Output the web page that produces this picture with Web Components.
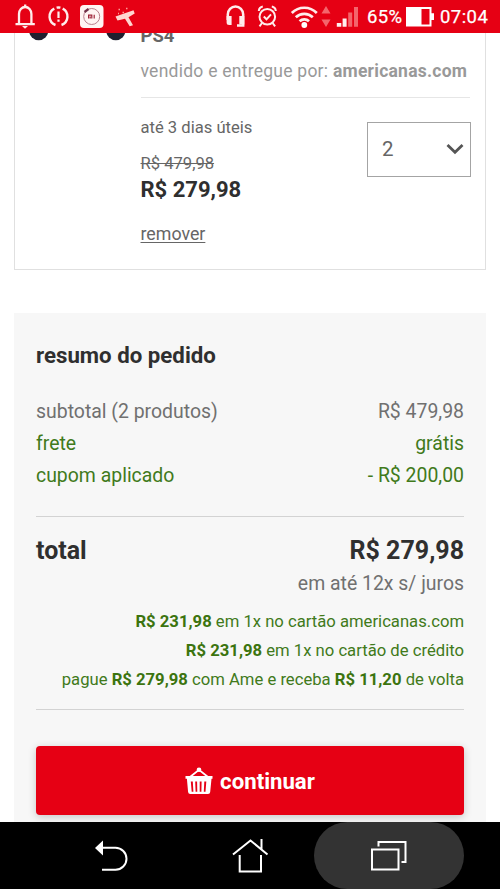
<!DOCTYPE html>
<html lang="pt-BR">
<head>
<meta charset="utf-8">
<title>americanas.com</title>
<style>
html,body{margin:0;height:100%;background:#fff}
body{font-family:Roboto,"Liberation Sans",sans-serif;overflow:hidden}
</style>
</head>
<body>
<cart-screen></cart-screen>
<script>
function define(name, html){
  const t=document.createElement('template');
  t.innerHTML=html;
  customElements.define(name,class extends HTMLElement{
    constructor(){super();this.attachShadow({mode:'open'}).append(t.content.cloneNode(true));}
  });
}

define('status-bar',`<style>
:host{display:flex;align-items:center;height:33px;background:#e60014;color:#fff;box-sizing:border-box;flex:none}
svg{display:block;flex:none}
.gap{flex:1}
span{font-size:18.5px;line-height:33px;white-space:nowrap;position:relative;top:1px;-webkit-text-stroke:.25px #fff}
.p{width:37px;margin-left:7px;letter-spacing:.3px}
.t{width:60px;letter-spacing:.45px}
</style>
<svg width="140" height="33" viewBox="0 0 140 33" fill="none" stroke="#ffeceb" stroke-width="2">
 <path d="M19 23V14a6.200 7 0 0 1 12.400 0V23M15.500 24.200H34.800M25.200 4.500V8" stroke-width="2.300"/><path d="M22 26h6l-3 2.800z" fill="#ffeceb" stroke="none"/>
 <path d="M54.300 8.600A9 9 0 0 0 55.500 25M61.500 25A9 9 0 0 0 62.700 8.600M56.600 7.700A9 9 0 0 1 60.400 7.700" stroke-width="2.400"/>
 <path d="M58.500 11.500V18M58.500 19.500V21.800" stroke-width="2.200"/>
 <rect x="80" y="5" width="23.500" height="23" rx="4" fill="#fff4f3" stroke="none"/>
 <circle cx="91.700" cy="16.500" r="8" stroke="#b9808d" stroke-width="1"/>
 <path d="M84.500 12l4-3" stroke="#713048" stroke-width="2.200"/>
 <path d="M88.600 18.500v-3.300h3.200v3.300M90.200 16.500v2M94.200 14.800v3.700" stroke="#9e2439" stroke-width="1.200"/>
 <path d="M115.500 16.500L133.500 10.300L134.700 13.500L128.500 17.300L133 25.200L129.700 26.200L125 18.700L117.500 20.500Z" fill="#ffd6d0" stroke="none"/>
 <path d="M118.500 9.500h1.500M126 8.500h1.500M122.500 12.500h1.500M118 13.500h1" stroke="#ff9b95" stroke-width="1.500"/>
</svg>
<div class="gap"></div>
<svg width="135" height="33" viewBox="225 0 135 33" fill="none" stroke="#ffeceb" stroke-width="2">
 <path d="M227.800 20V14.500a7.700 8 0 0 1 15.400 0V25.500H237" stroke-width="2.500"/>
 <path d="M226.600 16h5v9h-2.500a2.500 2.500 0 0 1-2.500-2.500zM239.300 16h5v8.500h-5z" fill="#ffeceb" stroke="none"/>
 <circle cx="267.300" cy="16.800" r="7.800"/><path d="M263.800 16.500l2.700 2.800 4.500-5M258.800 11a5 5 0 0 1 4-4.500M271.800 6.500a5 5 0 0 1 4 4.500M262 23l-2.500 3.300M272.600 23l2.500 3.300"/>
 <path d="M291.800 13a17.500 17.500 0 0 1 25 0M295.800 17.300a12.200 12.200 0 0 1 17 0M299.600 21.300a6.800 6.800 0 0 1 9.400 0" stroke-width="2.700"/>
 <circle cx="304.300" cy="25" r="2.900" fill="#fff" stroke="none"/>
 <path d="M321.500 13.500l4.500-7.500 4.500 7.500zM321.500 19.500l4.500 7.500 4.500-7.500z" fill="#f4656c" stroke="none"/>
 <path d="M336.800 23h4.500v3.800h-4.500zM342.600 18.500h4v8.300h-4z" fill="#fff0ef" stroke="none"/>
 <path d="M348.200 12.500h4v14.300h-4zM354 7h4v19.800h-4z" fill="#f4656c" stroke="none"/>
</svg>
<span class="p">65%</span>
<svg width="36" height="33" viewBox="404 0 36 33"><path fill="#fff" fill-rule="evenodd" d="M406 7h25.500v6.300h2.500v6.700h-2.500v6.500H406zM421.500 9v15.500h8V9z"/></svg>
<span class="t">07:04</span>`);

define('seller-line',`<style>
:host{display:block;height:24px;line-height:24px;font-size:17.500px;letter-spacing:.25px;color:#999;white-space:nowrap}
::slotted(b){font-weight:700}
</style><slot></slot>`);

define('qty-select',`<style>
:host{display:flex;box-sizing:border-box;width:104px;height:55px;margin-right:-1px;border:1px solid #a4a4a4;align-items:center;justify-content:space-between;padding:0 6px 1px 14px;color:#666;font-size:20.500px}
svg{display:block}
</style><slot></slot>
<svg width="18" height="12" viewBox="0 0 18 12" fill="none" stroke="#555" stroke-width="2.800"><path d="M1.500 2L9 9.300L16.500 2"/></svg>`);

define('product-card',`<style>
:host{display:block;box-sizing:border-box;height:237px;margin:0 14px;border:1px solid #e0e0e0;border-top:0;overflow:hidden}
.body{display:grid;grid-template-columns:125.500px 1fr;padding-right:15px}
.pic svg{display:block}
.name{height:24px;line-height:24px;margin-top:-9px;font-size:18.500px;font-weight:700;color:#666}
seller-line{margin-top:11px}
.rule{height:1px;background:#e6e6e6;margin-top:14px}
.row{display:flex;justify-content:space-between;align-items:flex-start}
.row>div{padding-top:18px}
qty-select{margin-top:24px}
.l{height:24px;line-height:24px;font-size:16.600px;color:#666;white-space:nowrap}
.old{margin-top:12px;text-decoration:line-through}
.now{margin-top:2px;font-size:22px;font-weight:700;color:#2f2f2f}
.rm{margin-top:20px;font-size:17.800px;text-decoration:underline;text-underline-offset:2px;text-decoration-thickness:1px}
</style>
<div class="body">
 <div class="pic"><svg width="126" height="12" viewBox="15 33 126 12"><ellipse cx="38.700" cy="31" rx="9.500" ry="9.300" fill="#20202f"/><ellipse cx="115.800" cy="31" rx="9.500" ry="9.300" fill="#20202f"/></svg></div>
 <div>
  <div class="name">PS4</div>
  <seller-line>vendido e entregue por: <b>americanas.com</b></seller-line>
  <div class="rule"></div>
  <div class="row">
   <div>
    <div class="l">até 3 dias úteis</div>
    <div class="l old">R$ 479,98</div>
    <div class="l now">R$ 279,98</div>
    <div class="l rm">remover</div>
   </div>
   <qty-select>2</qty-select>
  </div>
 </div>
</div>`);

define('summary-row',`<style>
:host{display:flex;justify-content:space-between;height:32px;line-height:32px;font-size:19.430px;color:var(--c,#707070);white-space:nowrap}
</style><slot name="label"></slot><slot name="value"></slot>`);

define('pay-option',`<style>
:host{display:block;height:29px;line-height:29px;font-size:16.670px;color:#417a1b;text-align:right;white-space:nowrap}
::slotted(b){font-weight:700;color:#3c740f}
</style><slot></slot>`);

define('buy-button',`<style>
:host{display:flex;align-items:center;justify-content:center;gap:7px;height:69px;border-radius:4px;background:#e60014;color:#fff;font-size:22.200px;font-weight:700;box-shadow:0 2px 8px rgba(0,0,0,.2)}
svg{display:block}
</style>
<svg width="28" height="28" viewBox="185 766 28 28"><path d="M190 776L199 768.800L208 776" fill="none" stroke="#fff" stroke-width="1.800"/><circle cx="199" cy="768.800" r="2.300" fill="#fff"/>
<path fill="#fff" fill-rule="evenodd" d="M185.500 775h27v2.800h-1l-1.300 13.300q-.2 2-2.200 2H190.300q-2 0-2.200-2L186.900 777.800H185.500zM190.800 780.500l.9 10.300h1.700l-.6-10.300zM195.200 780.500l.4 10.300h1.700l-.2-10.300zM199.700 780.500v10.300h1.700l.2-10.300zM204.300 780.500l-.5 10.300h1.700l.8-10.300z"/></svg>
<slot></slot>`);

define('order-summary',`<style>
:host{display:block;box-sizing:border-box;height:520px;margin:43px 14px 0;padding:26px 22px 0;background:#f7f7f7}
h2{margin:0 0 25px;height:32px;line-height:32px;font-size:22.250px;font-weight:700;color:#2f2f2f;white-space:nowrap}
.g{--c:#417a1b}
.rule{height:1px;background:#d3d3d3}
.a{margin-top:24px}
.total{display:flex;justify-content:space-between;height:34px;line-height:34px;margin-top:17px;font-size:25px;font-weight:700;color:#2f2f2f;white-space:nowrap}
.inst{height:32px;line-height:32px;text-align:right;font-size:19.430px;color:#707070;margin-bottom:7px}
.b{margin:15px 0 36px}
</style>
<h2>resumo do pedido</h2>
<summary-row><span slot="label">subtotal (2 produtos)</span><span slot="value">R$ 479,98</span></summary-row>
<summary-row class="g"><span slot="label">frete</span><span slot="value">grátis</span></summary-row>
<summary-row class="g"><span slot="label">cupom aplicado</span><span slot="value">- R$ 200,00</span></summary-row>
<div class="rule a"></div>
<div class="total"><span>total</span><span>R$ 279,98</span></div>
<div class="inst">em até 12x s/ juros</div>
<pay-option><b>R$ 231,98</b> em 1x no cartão americanas.com</pay-option>
<pay-option><b>R$ 231,98</b> em 1x no cartão de crédito</pay-option>
<pay-option>pague <b>R$ 279,98</b> com Ame e receba <b>R$ 11,20</b> de volta</pay-option>
<div class="rule b"></div>
<buy-button>continuar</buy-button>`);

define('nav-bar',`<style>
:host{display:flex;justify-content:center;height:67px;background:#000;flex:none}
div{width:150px;height:67px;display:flex;align-items:center;justify-content:center}
div+div{margin-left:-11px}
.on{background:#333;border-radius:33.500px}
svg{display:block;fill:none;stroke:#fff;stroke-width:2}
</style>
<div><svg width="150" height="67" viewBox="36 822 150 67"><path d="M102 847.800H115.500a11 11 0 0 1 0 22H102"/><path d="M95 848l8-7.500v15z" fill="#fff" stroke="none"/></svg></div>
<div><svg width="150" height="67" viewBox="175 822 150 67"><path d="M233 854.500L250.500 840.500L267.500 854.500M261.500 849V839M239.700 855V871.500H261V855"/></svg></div>
<div class="on"><svg width="150" height="67" viewBox="314 822 150 67"><path d="M372 849.500H398.500V869.500H372ZM378.500 846.500V842H405.500V862H401.500"/></svg></div>`);

define('cart-screen',`<style>
:host{display:flex;flex-direction:column;width:500px;height:889px;overflow:hidden;background:#fff}
main{flex:1;min-height:0;overflow:hidden}
</style>
<status-bar></status-bar>
<main><product-card></product-card><order-summary></order-summary></main>
<nav-bar></nav-bar>`);
</script>
</body>
</html>
